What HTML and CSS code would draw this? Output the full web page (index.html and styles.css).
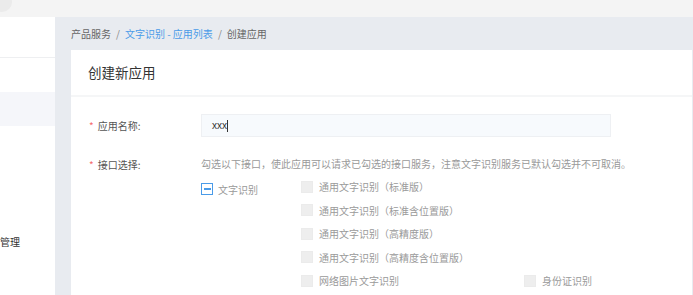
FILE: index.html
```html
<!DOCTYPE html>
<html lang="zh-CN">
<head>
    <meta charset="UTF-8">
    <meta name="viewport" content="width=device-width, initial-scale=1.0">
    <title>创建应用</title>
    <link rel="stylesheet" href="styles.css">
</head>
<body>
    <div class="topbar"><span class="avatar"></span></div>
    <div class="layout">
        <aside class="sidebar">
            <div class="side-head"></div>
            <div class="menu-item"></div>
            <div class="menu-item active"></div>
            <div class="menu-item menu-group">管理</div>
        </aside>
        <main class="main">
            <div class="breadcrumb">
                <span>产品服务</span>
                <span class="sep">/</span>
                <a href="#" class="crumb-link">文字识别 - 应用列表</a>
                <span class="sep">/</span>
                <span>创建应用</span>
            </div>
            <div class="card">
                <div class="card-head">创建新应用</div>
                <div class="card-body">
                    <div class="form-row">
                        <label class="form-label"><i class="req">*</i>应用名称:</label>
                        <div class="form-control">
                            <div class="text-input">xxx<span class="caret"></span></div>
                        </div>
                    </div>
                    <div class="form-row">
                        <label class="form-label"><i class="req">*</i>接口选择:</label>
                        <div class="form-control">
                            <p class="hint">勾选以下接口，使此应用可以请求已勾选的接口服务，注意文字识别服务已默认勾选并不可取消。</p>
                            <div class="api-group">
                                <div class="check">
                                    <span class="box indeterminate"></span>
                                    <span>文字识别</span>
                                </div>
                                <div class="api-list">
                                    <div class="check"><span class="box disabled"></span><span>通用文字识别（标准版）</span></div>
                                    <div class="check"><span class="box disabled"></span><span>通用文字识别（标准含位置版）</span></div>
                                    <div class="check"><span class="box disabled"></span><span>通用文字识别（高精度版）</span></div>
                                    <div class="check"><span class="box disabled"></span><span>通用文字识别（高精度含位置版）</span></div>
                                    <div class="check"><span class="box disabled"></span><span>网络图片文字识别</span></div>
                                    <div class="check"><span class="box disabled"></span><span>身份证识别</span></div>
                                </div>
                            </div>
                        </div>
                    </div>
                </div>
            </div>
        </main>
    </div>
</body>
</html>
```

FILE: styles.css
```css
body {
    margin: 0;
    width: 693px;
    height: 295px;
    overflow: hidden;
    font-family: "Noto Sans CJK SC", "Liberation Sans", sans-serif;
    font-size: 10px;
    color: #333;
    background: #e8ebf0;
}
.topbar {
    height: 17px;
    background: #f4f4f4;
    position: relative;
    overflow: hidden;
}
/* 左上角头像，被裁掉一半 */
.avatar {
    position: absolute;
    left: -8px;
    top: -8px;
    width: 20px;
    height: 20px;
    border-radius: 50%;
    background: #ebebeb;
}
.layout {
    display: flex;
    height: 278px;
}
.sidebar {
    width: 55px;
    background: #fff;
    flex-shrink: 0;
}
.side-head {
    height: 40px;
    border-bottom: 1px solid #eeeff1;
}
.menu-item {
    height: 34px;
    line-height: 34px;
    color: #333;
    white-space: nowrap;
}
.menu-item.active {
    background: #f5f6fa;
}
.menu-group {
    margin-top: 99px;
}
.main {
    flex: 1;
    padding: 0 1px 0 16px;
}
.breadcrumb {
    height: 33px;
    line-height: 33px;
    color: #666;
    display: flex;
}
.sep {
    margin: 0 5px;
    color: #888;
}
.crumb-link {
    color: #4a9be8;
    text-decoration: none;
}
.card {
    background: #fff;
    height: 245px;
}
.card-head {
    height: 45px;
    line-height: 45px;
    padding-left: 17px;
    font-size: 13.5px;
    color: #333;
    border-bottom: 2px solid #f5f6f7;
}
.card-body {
    padding: 17px 0 0 18px;
}
.form-row {
    display: flex;
    margin-bottom: 18px;
}
.form-label {
    width: 112px;
    flex-shrink: 0;
    color: #555;
    line-height: 23px;
}
.form-row + .form-row .form-label {
    line-height: 14px;
    padding-top: 3px;
}
.req {
    font-style: normal;
    color: #f56c6c;
    margin-right: 4px;
}
.text-input {
    width: 398px;
    height: 21px;
    line-height: 21px;
    padding-left: 10px;
    background: #f7fafd;
    border: 1px solid #eef0f3;
    color: #333;
    font-family: "Liberation Sans", sans-serif;
}
.caret {
    display: inline-block;
    width: 1px;
    height: 12px;
    background: #333;
    vertical-align: middle;
}
.hint {
    margin: 0;
    line-height: 14px;
    padding-top: 2px;
    color: #999;
}
.api-group {
    display: flex;
    margin-top: 4px;
}
.api-group > .check {
    width: 100px;
    height: 28px;
    align-self: flex-start;
}
.api-list {
    display: grid;
    grid-template-columns: 223px 1fr;
}
.api-list .check {
    grid-column: 1 / 3;
}
.api-list .check:nth-child(5) {
    grid-column: 1;
}
.api-list .check:nth-child(6) {
    grid-column: 2;
}
.check {
    display: flex;
    align-items: center;
    height: 23.5px;
    color: #9a9a9a;
    white-space: nowrap;
}
.box {
    width: 12px;
    height: 12px;
    box-sizing: border-box;
    margin-right: 6px;
    flex-shrink: 0;
}
.box.disabled {
    background: #eeeeee;
    border: 1px solid #ebebeb;
}
.box.indeterminate {
    border: 1.5px solid #4a9be8;
    background: #fff;
    margin-right: 5px;
    position: relative;
}
.box.indeterminate::after {
    content: "";
    position: absolute;
    left: 1.5px;
    right: 1.5px;
    top: 3.5px;
    height: 2px;
    background: #4a9be8;
}
```
